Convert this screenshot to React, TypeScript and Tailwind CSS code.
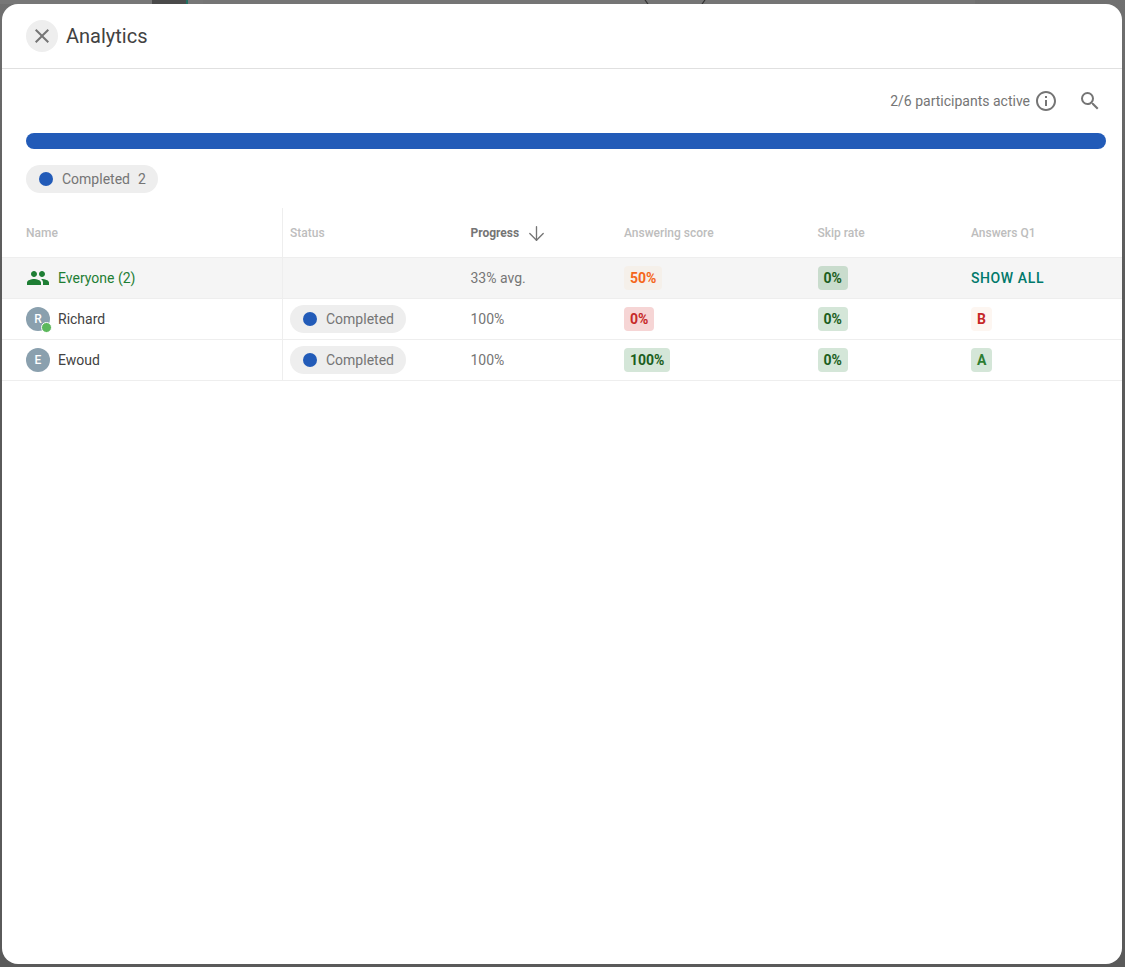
import React from 'react';
import { ArrowDown } from 'lucide-react';
import { MdClose, MdInfoOutline, MdPeople, MdSearch } from 'react-icons/md';

const gridCols = 'grid grid-cols-[281px_180.5px_153.5px_193.5px_153.5px_1fr]';

type Tone = 'orange' | 'red' | 'green' | 'greenDark' | 'redLight' | 'greenLetter';

const toneClasses: Record<Tone, string> = {
  orange: 'bg-[#f5f0ea] text-[#f4661b]',
  red: 'bg-[#f6d5d5] text-[#c62828]',
  green: 'bg-[#d4e6d8] text-[#1b5e20]',
  greenDark: 'bg-[#c9dccd] text-[#1b5e20]',
  redLight: 'bg-[#fdf6f1] text-[#c62828]',
  greenLetter: 'bg-[#d4e6d8] text-[#2e7d32]',
};

function Chip({ tone, children }: { tone: Tone; children: React.ReactNode }) {
  return (
    <span className={`inline-flex h-6 items-center rounded px-1.5 text-sm font-bold ${toneClasses[tone]}`}>
      {children}
    </span>
  );
}

function StatusPill({ label }: { label: React.ReactNode }) {
  return (
    <span className="inline-flex h-7 items-center gap-[9px] rounded-full bg-[#eeeeee] pl-[13px] pr-3 text-sm text-[#757575]">
      <span className="h-[14px] w-[14px] rounded-full bg-[#225bb8]" />
      {label}
    </span>
  );
}

function Avatar({ letter, online }: { letter: string; online?: boolean }) {
  return (
    <span className="relative flex h-6 w-6 items-center justify-center rounded-full bg-[#8aa0ae] text-xs font-medium text-white">
      {letter}
      {online && (
        <span className="absolute -right-[1.5px] -bottom-[1.5px] h-[11px] w-[11px] rounded-full border-[1.5px] border-white bg-[#5cb85c]" />
      )}
    </span>
  );
}

function HeaderCell({ children, active }: { children: React.ReactNode; active?: boolean }) {
  return (
    <div
      className={`flex items-center pt-px pl-[7px] text-xs ${
        active ? 'font-bold text-[#757575]' : 'font-medium text-[#bdbdbd]'
      }`}
    >
      {children}
    </div>
  );
}

function Row({
  name,
  status,
  progress,
  score,
  skip,
  answer,
  shaded,
}: {
  name: React.ReactNode;
  status?: React.ReactNode;
  progress: string;
  score: React.ReactNode;
  skip: React.ReactNode;
  answer: React.ReactNode;
  shaded?: boolean;
}) {
  return (
    <div className={`${gridCols} h-[41px] border-b border-[#eeeeee] ${shaded ? 'bg-[#f5f5f5]' : ''}`}>
      <div className="flex items-center gap-2 border-r border-[#eeeeee] pl-6 text-sm text-[#424242]">{name}</div>
      <div className="flex items-center pl-[7px]">{status}</div>
      <div className="flex items-center pl-[7px] text-sm text-[#757575]">{progress}</div>
      <div className="flex items-center pl-[7px]">{score}</div>
      <div className="flex items-center pl-[7px]">{skip}</div>
      <div className="flex items-center pl-[7px]">{answer}</div>
    </div>
  );
}

export default function App() {
  return (
    <div className="relative h-[967px] w-[1125px] overflow-hidden bg-[#5a5a5a] bg-linear-to-b from-[#707070] to-[#5a5a5a] to-[30%] pt-1 pr-[3px] pl-0.5 font-['Roboto',sans-serif]">
      {/* page behind the dialog, only a sliver shows at the top */}
      <div className="absolute top-0 left-0 h-1 w-[203px] bg-[#777777]" />
      <div className="absolute top-0 left-[152px] h-1 w-9 bg-[#4a4a4a]" />
      <div className="absolute top-0 left-[186px] h-1 w-0.5 bg-[#1f6f62]" />
      <div className="absolute top-0 left-[203px] h-1 w-[772px] bg-[#757575]" />
      <svg className="absolute top-0 left-[640px] h-1 w-[70px]" viewBox="0 0 70 4" fill="none" stroke="#333333" strokeWidth="1.2">
        <path d="M5 0 L8 4" />
        <path d="M65 0 L62 4" />
      </svg>

      <div className="relative flex h-[960px] flex-col overflow-hidden rounded-2xl bg-white">
        <header className="flex h-[65px] shrink-0 items-center gap-2 border-b border-[#e0e0e0] pl-6">
          <button className="flex h-8 w-8 items-center justify-center rounded-full bg-[#eeeeee] text-[#757575]">
            <MdClose size={24} />
          </button>
          <h1 className="text-xl text-[#424242]">Analytics</h1>
        </header>

        <div className="flex h-16 shrink-0 items-center justify-end pr-5 text-[#757575]">
          <span className="text-sm">2/6 participants active</span>
          <MdInfoOutline size={24} className="ml-1" />
          <MdSearch size={24} className="ml-5" />
        </div>

        <div className="mr-4 ml-6 h-4 shrink-0 rounded-full bg-[#225bb8]" />

        <div className="mt-4 flex shrink-0 pl-6">
          <StatusPill
            label={
              <span>
                Completed<span className="ml-2">2</span>
              </span>
            }
          />
        </div>

        <div className={`${gridCols} mt-[15px] h-[50px] shrink-0 border-b border-[#eeeeee]`}>
          <div className="flex items-center border-r border-[#eeeeee] pt-px pl-6 text-xs font-medium text-[#bdbdbd]">
            Name
          </div>
          <HeaderCell>Status</HeaderCell>
          <HeaderCell active>
            Progress
            <ArrowDown size={23} strokeWidth={1.4} className="ml-[6px]" />
          </HeaderCell>
          <HeaderCell>Answering score</HeaderCell>
          <HeaderCell>Skip rate</HeaderCell>
          <HeaderCell>Answers Q1</HeaderCell>
        </div>

        <Row
          shaded
          name={
            <>
              <MdPeople size={24} className="text-[#1e7e34]" />
              <span className="text-[#1e7e34]">Everyone (2)</span>
            </>
          }
          progress="33% avg."
          score={<Chip tone="orange">50%</Chip>}
          skip={<Chip tone="greenDark">0%</Chip>}
          answer={<span className="text-sm font-medium tracking-[0.6px] text-[#00796b]">SHOW ALL</span>}
        />
        <Row
          name={
            <>
              <Avatar letter="R" online />
              <span>Richard</span>
            </>
          }
          status={<StatusPill label="Completed" />}
          progress="100%"
          score={<Chip tone="red">0%</Chip>}
          skip={<Chip tone="green">0%</Chip>}
          answer={<Chip tone="redLight">B</Chip>}
        />
        <Row
          name={
            <>
              <Avatar letter="E" />
              <span>Ewoud</span>
            </>
          }
          status={<StatusPill label="Completed" />}
          progress="100%"
          score={<Chip tone="green">100%</Chip>}
          skip={<Chip tone="green">0%</Chip>}
          answer={<Chip tone="greenLetter">A</Chip>}
        />
      </div>
    </div>
  );
}
